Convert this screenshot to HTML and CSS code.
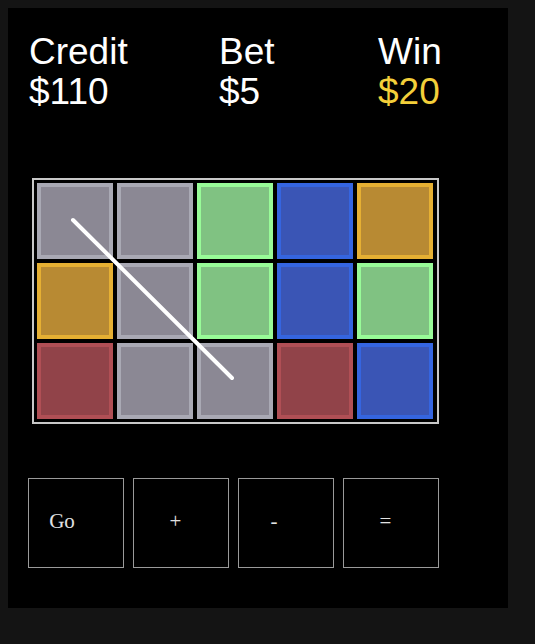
FILE: index.html
```html
<!DOCTYPE html>
<html>
<head>
    <title>Slots</title>
    <meta charset="UTF-8">
    <link rel="stylesheet" href="styles.css">
</head>
<body>

<div class="machine">
    <div class="stats">
        <div class="stat stat-credit">
            <div>Credit</div>
            <div>$110</div>
        </div>
        <div class="stat stat-bet">
            <div>Bet</div>
            <div>$5</div>
        </div>
        <div class="stat stat-win">
            <div>Win</div>
            <div class="win-amount">$20</div>
        </div>
    </div>

    <div class="reels">
        <div class="cell gray"></div>
        <div class="cell gray"></div>
        <div class="cell green"></div>
        <div class="cell blue"></div>
        <div class="cell gold"></div>

        <div class="cell gold"></div>
        <div class="cell gray"></div>
        <div class="cell green"></div>
        <div class="cell blue"></div>
        <div class="cell green"></div>

        <div class="cell red"></div>
        <div class="cell gray"></div>
        <div class="cell gray"></div>
        <div class="cell red"></div>
        <div class="cell blue"></div>

        <svg class="payline" width="407" height="246" viewBox="0 0 407 246">
            <line x1="41" y1="42" x2="200" y2="200" stroke="#fff" stroke-width="4" stroke-linecap="round"/>
        </svg>
    </div>

    <div class="keys">
        <button class="key key-go">Go</button>
        <button class="key">+</button>
        <button class="key key-minus">-</button>
        <button class="key">=</button>
    </div>
</div>

</body>
</html>
```

FILE: styles.css
```css
body {
    margin: 8px;
    background: #141414;
}

.machine {
    width: 500px;
    height: 600px;
    box-sizing: border-box;
    background: black;
    padding: 24px 0 0 19px;
}

.stats {
    display: flex;
    margin-left: 2px;
    font-family: "Liberation Sans", Arial, sans-serif;
    font-size: 37px;
    line-height: 40px;
    color: white;
}

.stat-credit {
    width: 190px;
}

.stat-bet {
    width: 159px;
}

.win-amount {
    color: #f3cf3a;
}

.reels {
    position: relative;
    display: grid;
    grid-template-columns: repeat(5, 76px);
    grid-template-rows: repeat(3, 76px);
    gap: 4px;
    width: max-content;
    margin: 66px 0 0 5px;
    padding: 3px 4px 3px 3px;
    border: 2px solid #c8c8c8;
}

.cell {
    box-sizing: border-box;
    border: 4px solid;
}

.gray {
    background: #8b8894;
    border-color: #a9a9b4;
}

.green {
    background: #80c282;
    border-color: #98fb98;
}

.blue {
    background: #3a55b5;
    border-color: #3565e0;
}

.gold {
    background: #b88a33;
    border-color: #e6b033;
}

.red {
    background: #914349;
    border-color: #b04f55;
}

.payline {
    position: absolute;
    top: -2px;
    left: -2px;
}

.keys {
    display: flex;
    gap: 9px;
    margin: 54px 0 0 1px;
}

.key {
    width: 96px;
    height: 90px;
    padding: 0 11px 4px 0;
    background: black;
    border: 1px solid #9a9a9a;
    color: #e2e2e2;
    font-family: "Liberation Serif", "Times New Roman", serif;
    font-size: 21px;
    text-align: center;
}

.key-go {
    padding-right: 28px;
}

.key-minus {
    padding-right: 24px;
}
```
